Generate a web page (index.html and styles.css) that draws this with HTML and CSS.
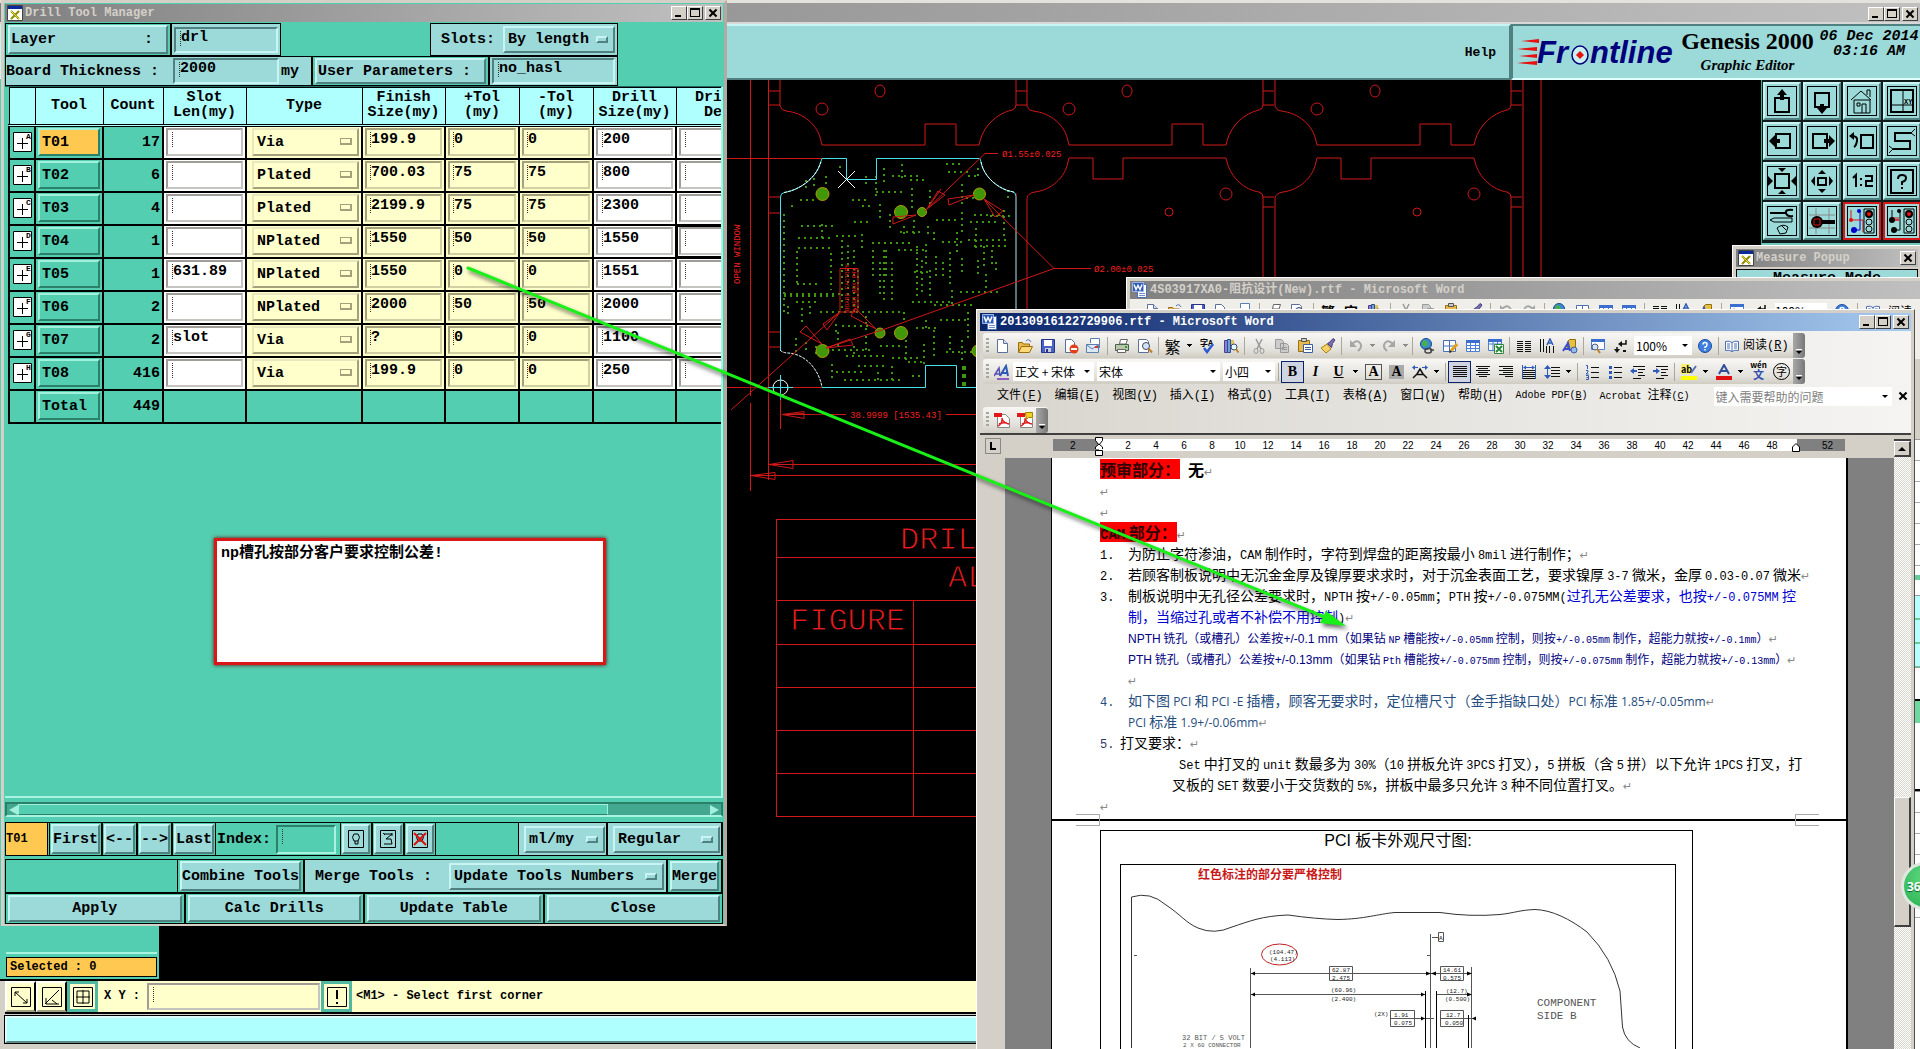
FILE: index.html
```html
<!DOCTYPE html>
<html lang="zh-CN">
<head>
<meta charset="utf-8">
<title>Genesis 2000 - Drill Tool Manager</title>
<link rel="stylesheet" href="styles.css">
</head>
<body>
<svg class="defs" aria-hidden="true">
  <defs>
    <symbol id="x-logo" viewBox="0 0 16 16"><path fill="#fff" stroke="#444" d="M.5.5h15v15H.5z"/><path fill="#0a2a9a" d="M1 1h14v3H1z"/><path stroke="#8a8a00" stroke-width="2" d="M4 6l8 8M12 6l-8 8"/><path stroke="#e8e020" stroke-width="1" d="M4 6l8 8"/></symbol>
    <symbol id="w-logo" viewBox="0 0 16 16"><path fill="#fff" stroke="#4a6fb5" d="M5.500 2.500h9v13h-9z"/><path stroke="#6d8fd0" d="M7 11.500h6M7 13.500h6"/><path fill="#2f5bb8" stroke="#9db7e6" d="M.5.5h11v9H.5z"/><path fill="none" stroke="#fff" stroke-width="1.500" d="M2 2.500l2 5 2-4 2 4 2-5"/></symbol>
    <symbol id="i-new" viewBox="0 0 16 16"><path fill="#fff" stroke="#5a6f9a" d="M3.500 1.500h6l4 4v9h-10z"/><path fill="#d5e0f5" stroke="#5a6f9a" d="M9.500 1.500v4h4"/></symbol>
    <symbol id="i-open" viewBox="0 0 16 16"><path fill="#e9b84a" stroke="#9a6f10" d="M1.500 14V4.500h4l1 1.500h6v2"/><path fill="#ffd978" stroke="#9a6f10" d="M1.500 14.500l3-6h11l-3 6z"/><path fill="none" stroke="#4a6fb5" d="M9 3q3-3 5 1"/></symbol>
    <symbol id="i-save" viewBox="0 0 16 16"><path fill="#4b62c4" stroke="#26348a" d="M1.500 1.500h13v13h-13z"/><path fill="#fff" d="M4 2h8v6H4z"/><path fill="#c8cdd8" d="M5 10h6v4H5z"/><path fill="#26348a" d="M6 11h2v3H6z"/></symbol>
    <symbol id="i-perm" viewBox="0 0 16 16"><path fill="#fff" stroke="#5a6f9a" d="M2.500 1.500h6l3 3v10h-9z"/><circle cx="11" cy="11" r="4.500" fill="#e0401c"/><path fill="#fff" d="M8 10h6v2H8z"/></symbol>
    <symbol id="i-mail" viewBox="0 0 16 16"><path fill="#fff" stroke="#5a7fb0" d="M4.500 5V.5h9V10"/><path fill="#dfe8f5" stroke="#5a7fb0" d="M.5 6.500h12v8H.5z"/><path fill="none" stroke="#5a7fb0" d="M1 7l5 4 6-4"/><path fill="#d33" d="M9 8h3v2H9z"/></symbol>
    <symbol id="i-print" viewBox="0 0 16 16"><path fill="#fff" stroke="#666" d="M5.500 6l1-4.500h7L12 6z"/><path fill="#b7c7a8" stroke="#4a6050" d="M1.500 6.500h13v6h-13z"/><path fill="#fff" stroke="#666" d="M3.500 11.500h8v3h-8z"/><path fill="#2c9c3c" d="M11 8h2v2h-2z"/></symbol>
    <symbol id="i-preview" viewBox="0 0 16 16"><path fill="#fff" stroke="#5a6f9a" d="M1.500 1.500h8l2 2v11h-10z"/><circle cx="9" cy="8" r="3.500" fill="#cfe6fa" stroke="#446"/><path stroke="#c08020" stroke-width="2" d="M11.500 10.500l3.500 4"/></symbol>
    <symbol id="i-spell" viewBox="0 0 16 16"><text x="0" y="8" font-size="8" font-weight="bold">字A</text><path fill="none" stroke="#2f5bd0" stroke-width="2.500" d="M4 10l3 4 6-8"/></symbol>
    <symbol id="i-research" viewBox="0 0 16 16"><path fill="#8a7fd0" stroke="#4a3f90" d="M1.500 2.500h3v12h-3z"/><path fill="#6fa0e0" stroke="#2a5090" d="M4.500 1.500h3v13h-3z"/><path fill="#e0c060" d="M8 2h3v5H8z"/><circle cx="11" cy="9" r="3" fill="#dff" stroke="#446"/><path stroke="#c08020" stroke-width="2" d="M13 11l2.500 3.500"/></symbol>
    <symbol id="i-cut" viewBox="0 0 16 16"><path fill="none" stroke="#999" stroke-width="1.500" d="M5 1l5 10M11 1L6 11"/><ellipse cx="5" cy="13" rx="2" ry="2.500" fill="none" stroke="#999"/><ellipse cx="11" cy="13" rx="2" ry="2.500" fill="none" stroke="#999"/></symbol>
    <symbol id="i-copy" viewBox="0 0 16 16"><path fill="#ccc" stroke="#999" d="M1.500 1.500h6l2 2v7h-8zM6.500 5.500h6l2 2v7h-8z"/><path stroke="#999" d="M8 9.500h5M8 11.500h5"/></symbol>
    <symbol id="i-paste" viewBox="0 0 16 16"><path fill="#e9b84a" stroke="#9a6f10" d="M1.500 2.500h11v11h-11z"/><path fill="#ccc" stroke="#555" d="M4.500.5h5v3h-5z"/><path fill="#fff" stroke="#3a5fa0" d="M6.500 6.500h9v8h-9z"/><path stroke="#3a5fa0" d="M8 9.500h6M8 11.500h6"/></symbol>
    <symbol id="i-brush" viewBox="0 0 16 16"><path fill="#f2d36a" stroke="#a98010" d="M1 10l6-4 4 5-5 4z"/><path fill="#7a6fb0" stroke="#443a80" d="M7.500 5.500L10 4l3-3.500 2 1.500-2.500 3.500-1 4z"/></symbol>
    <symbol id="i-undo" viewBox="0 0 16 16"><path fill="none" stroke="#a6a6a6" stroke-width="2" d="M4 6q5-5 8-1t-2 8"/><path fill="#a6a6a6" d="M2 2v7h7z"/></symbol>
    <symbol id="i-redo" viewBox="0 0 16 16"><path fill="none" stroke="#a6a6a6" stroke-width="2" d="M12 6Q7 1 4 5t2 8"/><path fill="#a6a6a6" d="M14 2v7H7z"/></symbol>
    <symbol id="i-link" viewBox="0 0 16 16"><circle cx="7" cy="6" r="5.500" fill="#3a8ad8" stroke="#1a4a80"/><path fill="#48b048" d="M4 2l4 1 1 4-4 2-2-3z"/><path fill="none" stroke="#444" stroke-width="1.500" d="M6 13q0-3 3-2.500h1q3 0 2.500 2.500t-3 2h-1Q6 15 6 13m5-1h4"/></symbol>
    <symbol id="i-tedit" viewBox="0 0 16 16"><path fill="#fff" stroke="#4a6fb5" d="M1.500 2.500h12v11h-12zM7.500 2v12M1 8h13"/><path stroke="#e0a020" stroke-width="3" d="M15 6l-6 7"/><path fill="#222" d="M7 15l1-3 2 2z"/></symbol>
    <symbol id="i-table" viewBox="0 0 16 16"><path fill="#fff" stroke="#4a7fd5" d="M1.500 2.500h13v11h-13zM5.500 3v11M10.500 3v11M1 7.500h14M1 10.500h14"/><path fill="#3a6fd0" d="M1 2h14v3H1z"/></symbol>
    <symbol id="i-excel" viewBox="0 0 16 16"><path fill="#fff" stroke="#4a7fd5" d="M.5 1.500h13v11H.5zM5 2v11M9.500 2v11M0 6h14"/><path fill="#3a6fd0" d="M0 1h14v3H0z"/><path fill="#fff" stroke="#2a8a3a" d="M6.500 6.500h9v9h-9z"/><path stroke="#2a8a3a" stroke-width="2" d="M8 8l6 6M14 8l-6 6"/></symbol>
    <symbol id="i-columns" viewBox="0 0 16 16"><path stroke="#111" d="M1 3.500h6M1 5.500h6M1 7.500h6M1 9.500h6M1 11.500h6M1 13.500h6M9 3.500h6M9 5.500h6M9 7.500h6M9 9.500h6M9 11.500h6M9 13.500h6"/></symbol>
    <symbol id="i-tdir" viewBox="0 0 16 16"><path stroke="#111" d="M1.500 1v13M4.500 1v13M7.500 8v7M10.500 8v7M14.500 8v7"/><path fill="none" stroke="#2f5bb8" stroke-width="1.500" d="M8 7l3-6 3 6M9 5h4"/></symbol>
    <symbol id="i-draw" viewBox="0 0 16 16"><path fill="#e8c040" stroke="#907010" d="M5.500 3.500l2-2h6v8l-2 2h-6z"/><path fill="none" stroke="#3a4fd0" stroke-width="2" d="M1 13L6 5l2 8M3 11h5"/><circle cx="12" cy="12" r="3" fill="#9ab8f0" stroke="#3a5fa0"/></symbol>
    <symbol id="i-map" viewBox="0 0 16 16"><path fill="#fff" stroke="#4a7fd5" d="M1.500 1.500h13v10h-13z"/><path fill="#3a6fd0" d="M1 1h14v3H1z"/><circle cx="5" cy="9" r="3" fill="#cfe6fa" stroke="#557"/><path stroke="#c08020" stroke-width="2" d="M7 11l3 4"/></symbol>
    <symbol id="i-para" viewBox="0 0 16 16"><path fill="none" stroke="#111" stroke-width="1.500" d="M13 2v4H8M4 9v3"/><path fill="#111" d="M5 6l4-3v6zM1 11l3 4 3-4zM10 12h3v2h-3z"/></symbol>
    <symbol id="i-help" viewBox="0 0 16 16"><circle cx="8" cy="8" r="6.500" fill="#3f7fe0" stroke="#1a4aa0"/><path fill="none" stroke="#fff" stroke-width="1.500" d="M6 6.500Q6 4.500 8 4.500t2 2T8 9v1M8 11v1.500"/></symbol>
    <symbol id="i-read" viewBox="0 0 16 16"><path fill="#fff" stroke="#4a6fb5" d="M1.500 3.500q4-1 6.500 1 2.500-2 6.500-1v9q-4-1-6.500 1-2.500-2-6.500-1z"/><path stroke="#4a6fb5" d="M8 4v10M3 6h3M3 8h3M3 10h3M10 6h3M10 8h3M10 10h3"/></symbol>
    <symbol id="i-just" viewBox="0 0 16 16"><path stroke="#111" d="M1 2.500h14M1 4.500h14M1 6.500h14M1 8.500h14M1 10.500h14M1 12.500h14"/></symbol>
    <symbol id="i-center" viewBox="0 0 16 16"><path stroke="#111" d="M1 2.500h14M3 4.500h10M1 6.500h14M3 8.500h10M1 10.500h14M4 12.500h8"/></symbol>
    <symbol id="i-right" viewBox="0 0 16 16"><path stroke="#111" d="M1 2.500h14M5 4.500h10M1 6.500h14M5 8.500h10M1 10.500h14M7 12.500h8"/></symbol>
    <symbol id="i-dist" viewBox="0 0 16 16"><path stroke="#111" d="M2 6.500h12M2 8.500h12M2 10.500h12M2 12.500h12M2 14.500h12"/><path stroke="#2f5bb8" d="M1.500 1v14M14.500 1v14M4 3.500h8"/><path fill="#2f5bb8" d="M2 3.500l3-2v4zM14 3.500l-3-2v4z"/></symbol>
    <symbol id="i-space" viewBox="0 0 16 16"><path stroke="#111" d="M7 3.500h9M7 6.500h9M7 9.500h9M7 12.500h9"/><path stroke="#2f5bb8" d="M3.500 2v12"/><path fill="#2f5bb8" d="M0 5l3.500-4L7 5zM0 11l3.500 4L7 11z"/></symbol>
    <symbol id="i-num" viewBox="0 0 16 16"><path stroke="#111" d="M7 3.500h8M7 8.500h8M7 13.500h8"/><path fill="none" stroke="#2f5bb8" d="M2 1.500h1.500V5M2 6.500h2v1.500l-2 2h2.500M2 11.500h2.500v4H2M2.500 13.500H4"/></symbol>
    <symbol id="i-bul" viewBox="0 0 16 16"><path stroke="#111" d="M7 3.500h8M7 8.500h8M7 13.500h8"/><path fill="#2f5bb8" d="M2 2h3v3H2zM2 7h3v3H2zM2 12h3v3H2z"/></symbol>
    <symbol id="i-out" viewBox="0 0 16 16"><path stroke="#111" d="M3 2.500h12M8 5.500h7M8 8.500h5M8 11.500h7M3 14.500h8"/><path fill="#2f5bb8" d="M0 7l4-3v2h3v2H4v2z"/></symbol>
    <symbol id="i-in" viewBox="0 0 16 16"><path stroke="#111" d="M3 2.500h12M8 5.500h7M8 8.500h5M8 11.500h7M3 14.500h8"/><path fill="#2f5bb8" d="M7 7L3 4v2H0v2h3v2z"/></symbol>
    <symbol id="i-aa" viewBox="0 0 16 16"><path fill="none" stroke="#5a4fb0" stroke-width="1.500" d="M0 12L5 4l1 8M2 10h4"/><path fill="none" stroke="#2f5bb8" stroke-width="2" d="M6 12l6-10 2 10M8 9h5"/><path stroke="#8a5fc0" stroke-width="2" d="M3 15h12"/></symbol>
    <symbol id="i-scale" viewBox="0 0 16 16"><path fill="none" stroke="#111" stroke-width="1.500" d="M1 14l4-4 3-5 3 5 4 4M5 10.500h6"/><path stroke="#2f5bb8" d="M1 3.500h5M10 3.500h5"/><path fill="#2f5bb8" d="M0 3.500l3-2.500v5zM16 3.500l-3-2.500v5z"/></symbol>
    <symbol id="i-hl" viewBox="0 0 16 16"><path fill="#f8f06a" d="M0 0h9v10H0z"/><text x="0" y="9" font-size="9" font-weight="bold">ab</text><path stroke="#5a6fb0" stroke-width="2" d="M15 2l-5 7"/><path fill="#ff0" d="M0 12h16v4H0z"/></symbol>
    <symbol id="i-fc" viewBox="0 0 16 16"><path fill="none" stroke="#2f4f9a" stroke-width="2" d="M3 10L8 1l5 9M5 7h6"/><path fill="#e01010" d="M0 12h16v4H0z"/></symbol>
    <symbol id="i-pdf" viewBox="0 0 16 16"><path fill="#fff" stroke="#888" d="M3.500 2.500h8l4 4v9h-12z"/><path fill="#e01818" d="M0 1h8v4H0z"/><path fill="none" stroke="#e01818" stroke-width="1.500" d="M8 6q1 5-4 8M8 7q2 4 7 5M5 12q4-2 8-1"/></symbol>
  </defs>
</svg>

<!-- Genesis graphic editor -->
<main class="editor">
  <header class="caption caption-main"><span class="grow"></span>
    <button class="cap min" aria-label="Minimize"></button><button class="cap max" aria-label="Maximize"></button><button class="cap close" aria-label="Close"></button>
  </header>
  <div class="banner">
    <nav class="menubar"><a href="#help">Help</a></nav>
    <div class="brand">
      <svg class="logo" width="160" height="34" viewBox="0 0 160 34" role="img" aria-label="Frontline">
        <path fill="#e81010" d="M4 6l18-2v4zM0 14l20-2v4zM2 21l18-2v4zM0 28l20-2v4z"/>
        <g font-family="Liberation Sans" font-weight="bold" font-style="italic" font-size="31" fill="#00007c"><text x="20" y="28">Fr</text><text x="73" y="28">ntline</text></g>
        <ellipse cx="63" cy="20" rx="8" ry="9" fill="#c8f0f0" stroke="#00007c" stroke-width="1.500"/><path fill="#e81010" d="M63 16l4 4-4 4-4-4z"/>
      </svg>
      <div class="product"><strong>Genesis 2000</strong><em>Graphic Editor</em></div>
      <time>06 Dec 2014<br>03:16 AM</time>
    </div>
  </div>
  <div class="workspace">
    <aside class="side"><div class="side-list"></div><div class="selected">Selected : 0</div></aside>
    <div class="canvas">
      <svg width="1600" height="900" viewBox="159 80 1600 900" fill="none" stroke="#d01818">
        <defs>
          <g id="upper"><path d="M0 80V106q2 5 6 5C24 113 38 125 41 141l1 4H145V124H176V145H199l1-4C204 125 218 113 232 110q4-1 4-5V80"/><ellipse cx="42" cy="109" rx="6" ry="6"/><ellipse cx="100" cy="91" rx="5" ry="6"/><path d="M236 91h11M236 105h11"/></g>
          <g id="lower"><path d="M42 158H66V179H96V158H199l1 4C204 178 218 190 232 192q4 1 4 5V420M42 158l-1 4C38 178 24 190 8 192q-7 1-8 6V420"/><circle cx="199" cy="194" r="6"/><circle cx="142" cy="212" r="4"/><path d="M236 197h11M236 207h11"/></g>
        </defs>
        <path d="M750.500 80V396M750.500 403V491M768.500 80V480M768 91h12M768 105h12M768 197h12M768 213h12M768 332h12M768 347h12M720 158.500H822M720 387.500H822M1016 193V400M1523 80V420M1541 80V420M780.500 387V429"/>
        <use href="#upper" x="780"/><use href="#upper" x="1027"/><use href="#upper" x="1275"/>
        <use href="#lower" x="1027"/><use href="#lower" x="1275"/>
        <g stroke="#3f960f" stroke-width="2" stroke-dasharray="2 4">
          <path d="M784 214V316M797 251V284M831 253V290M798 248H832M797 284h24M784 294h60M788 306v10M801 226h32M798 238h36M822 224v14M836 236h24M842 240V310M848 245V300M854 250V312M858 270V310M872 243H914M873 250v30M880 262v36M886 250v26M892 262v40M898 250h30M917 246V300M922 260V296M926 244v24M930 270V300M914 272h16M936 256v22M943 262v18M950 252v34M957 232v24M962 258v18M968 240h38M974 246h34M970 222h30M976 228v20M984 246v24M992 250v16M1004 210v30M974 215h26M978 260v14M986 274v16M996 262v10M960 292h40M934 305h40M884 250v50M942 242h24M952 290v16M868 312h34M784 296h50"/>
          <path d="M792 205v6M800 200h18M806 180v12M814 178v8M826 176v22M840 166v6M852 200h16M862 206h10M866 176v12M876 176v22M884 168v16M892 176h30M902 164v16M910 180h14M912 188v20M930 190v14M946 164h14M948 172h22M962 184v20M968 176h8M876 192h30M880 204v18M890 214v16M854 222h16M862 234v14M904 226v12M914 220v14M900 232h20M928 226v10M936 220h20M934 232v8M962 212v20M978 168v10M990 216h20M1008 190v10M966 198h18"/>
          <path d="M796 302h24M802 308v14M810 306v10M820 312h44M866 316v18M836 324v12M842 326h30M796 338v14M806 342v10M816 346v10M832 350h40M838 332v14M846 356h40M854 346v10M866 336v14M880 346h24M892 358h30M906 340v20M916 328h24M924 344v20M934 330v26M940 320h28M946 352h26M950 336v14M962 340v24M968 312v30M904 312v12M912 302h40M858 366h30M836 372h28M844 380h60M832 364v14M878 372v10M892 366v14M908 362h14M912 376h12M926 320v12"/>
        </g>
        <path stroke="#3f960f" stroke-width="4" stroke-dasharray="4 4" d="M964 366v22"/>
        <g fill="#409808" stroke="#b09a10"><circle cx="822.500" cy="194" r="6.500"/><circle cx="979.500" cy="194" r="6"/><circle cx="901" cy="212" r="6.500"/><circle cx="922" cy="212" r="4.500"/><circle cx="880" cy="333" r="5"/><circle cx="901" cy="333" r="6.500"/><circle cx="822.500" cy="351" r="6.500"/><circle cx="978" cy="351" r="6"/></g>
        <path stroke="#48e0e8" d="M822 158.500H846.500V179.500H876.500V158.500H980L981 162C984 178 1000 190 1012 191.500q4 1 4 5V350M981 387.500H956.500V365.500H925.500V387.500H822M780.500 350V197q0-4 4-4.500C800 190 816 178 820 164L822 158.500"/>
        <path stroke="#e8ffff" stroke-dasharray="3 1" d="M784 192.500C800 190 816 178 821 162M981 162C984 178 1000 190 1014 192M780 350q3 3 8 3C806 354 819 370 822 387"/>
        <path stroke="#fff" d="M838 171l17 17M855 171l-17 17"/><circle cx="780.500" cy="387.500" r="7.500" stroke="#fff"/><path stroke="#48e0e8" d="M768 387.500h25M780.500 375v25"/>
        <path d="M998 153.500H985L925 211M927 209l11-18 7 4zM927 209l14-20M974 195l-26 4 1 6zM916 215l-23 2v7zM1091 268.500H1054L984 199M984 199l11 18 8-6zM1054 268.500L885 329 826 348M826 348l24-9 3 6zM876 329l-25-13 4-8zM822 344l-22-12 6-6zM840 312L731 410M840 312l-17 12 4 6zM840 268.500h18V312H840z"/>
        <path d="M782 414.500H846M946 414.500H980M782 414.500l22-3v7zM782 414.500l22-1M769 464.500H980M769 464.500l24-4v8zM751 475.500H980M751 475.500l24-3v7z"/>
        <path d="M776.500 519.500H980M776.500 557.500H980M776.500 600.500H980M776.500 644.500H980M776.500 687.500H980M776.500 730.500H980M776.500 773.500H980M776.500 816.500H980M776.500 519V817M913.500 600V817"/>
        <g class="cad" stroke="none" fill="#f02020" font-size="9"><text x="1002" y="157">Ø1.55±0.025</text><text x="1094" y="272">Ø2.00±0.025</text><text x="850" y="418">38.9999 [1535.43]</text><text transform="translate(740 284) rotate(-90)">OPEN WINDOW</text><text font-size="6" transform="translate(849 311) rotate(-90)">BOARD FACTORY</text><text font-size="6" transform="translate(856 311) rotate(-90)">LOGO BOX 94V</text></g>
        <g class="cad" fill="#e81c1c" stroke="#000" font-size="32"><text x="900" y="549">DRILL</text><text x="948" y="587">ALL</text><text x="790" y="630">FIGURE</text></g>
      </svg>
    </div>
    <div class="tools">
      <button aria-label="Pan up"><svg viewBox="0 0 30 30"><path d="M8 12h14v14H8z"/><path class="f" d="M15 3l5 6h-3v5h-4V9h-3z"/></svg></button>
      <button aria-label="Pan down"><svg viewBox="0 0 30 30"><path d="M8 7h14v14H8z"/><path class="f" d="M15 28l5-6h-3v-4h-4v4h-3z"/></svg></button>
      <button aria-label="Home"><svg viewBox="0 0 30 30"><path class="t" d="M4 14L14 5l10 9M7 14v13h16V14zM20 9V4h3v7M15 27v-9h4v9M10 17h3v3h-3z"/></svg></button>
      <button aria-label="Coordinates"><svg viewBox="0 0 30 30"><path d="M4 4h22v22H4z"/><path class="t" d="M16 4v22M4 19h22"/><text x="17" y="18" font-size="7">XY</text></svg></button>
      <button aria-label="Pan left"><svg viewBox="0 0 30 30"><path d="M9 8h14v14H9z"/><path class="f" d="M2 15l6-6v4h5v4H8v4z"/></svg></button>
      <button aria-label="Pan right"><svg viewBox="0 0 30 30"><path d="M6 8h14v14H6z"/><path class="f" d="M28 15l-6-6v4h-5v4h5v4z"/></svg></button>
      <button aria-label="Previous view"><svg viewBox="0 0 30 30"><path d="M14 9h12v13H14zM5 10q6 0 5 5t-3 6"/><path class="f" d="M2 10l5-4v8z"/></svg></button>
      <button aria-label="Serpentine"><svg viewBox="0 0 30 30"><path d="M24 7H8v8h15v8H6"/><path class="t" d="M24 7l4-4M24 7l4 3M6 23l-4-3M6 23l-4 4"/></svg></button>
      <button aria-label="Zoom in"><svg viewBox="0 0 30 30"><path d="M8 8h14v14H8z"/><path class="f" d="M15 6l-4-4h8zM15 24l-4 4h8zM6 15l-5-5v10zM24 15l5-5v10z"/></svg></button>
      <button aria-label="Zoom out"><svg viewBox="0 0 30 30"><path d="M11 12h8v7h-8z"/><path class="f" d="M15 4l-4 4h8zM15 27l-4-4h8zM4 15l4-5v10zM26 15l-4-5v10z"/></svg></button>
      <button aria-label="Scale one to two"><svg viewBox="0 0 30 30"><path d="M6 12l3-3v12M14 12v2M14 18v2M18 10h7v5h-6v5h7"/></svg></button>
      <button aria-label="Query"><svg viewBox="0 0 30 30"><path d="M4 4h22v23H4zM11 13q0-4 4-4t4 3-4 4v3M15 21v2"/></svg></button>
      <button aria-label="Options"><svg viewBox="0 0 30 30"><path d="M3 7h16M26 4q-8-1-7 3t7 3"/><path class="t" d="M3 14l4-2h18v4H7zM10 22q6-5 11-1l-2 6-6 1zM15 20l4 4"/></svg></button>
      <button aria-label="Measure"><svg viewBox="0 0 30 30"><path stroke="#888" stroke-width="1" d="M2 9h26M2 22h26M9 2v26M22 2v26"/><circle class="f" cx="10" cy="16" r="6"/><path stroke-width="4" d="M14 16h14"/><path stroke="#e01010" stroke-width="1" d="M7 13h6v6H7z"/></svg></button>
      <button class="alert" aria-label="Net check on"><svg viewBox="0 0 30 30"><path class="t" stroke="#00c" d="M13 4v20H8"/><path class="t" stroke="#e01010" d="M4 4v10h12v12"/><circle cx="12" cy="5" r="2" fill="#00c" stroke="none"/><circle cx="7" cy="24" r="3" fill="#00c" stroke="none"/><circle cx="4" cy="14" r="2" fill="#e01010" stroke="none"/><path class="t" d="M17 3h10v24H17z"/><circle cx="22" cy="8" r="3" fill="#f01010"/><circle class="t" cx="22" cy="16" r="3"/><circle class="t" cx="22" cy="23" r="3"/></svg></button>
      <button class="alert" aria-label="Net check off"><svg viewBox="0 0 30 30"><path class="t" d="M13 4v20H8M5 4v10"/><path class="t" stroke="#e01010" d="M6 14h6M7 11v4M9 11v4M11 11v4"/><circle class="f" cx="12" cy="5" r="2"/><circle class="f" cx="7" cy="24" r="3"/><circle class="f" cx="5" cy="14" r="3"/><path class="t" d="M17 3h10v24H17z"/><circle cx="22" cy="8" r="3" fill="#f01010"/><circle class="t" cx="22" cy="16" r="3"/><circle class="t" cx="22" cy="23" r="3"/></svg></button>
    </div>
  </div>
  <footer class="status">
    <div class="coords">
      <button aria-label="Line mode"><svg viewBox="0 0 20 20"><path d="M.5.5h19v19H.5zM4 5l12 11M4 9V5h4M16 12v4h-4"/></svg></button>
      <button aria-label="Angle mode"><svg viewBox="0 0 20 20"><path d="M.5.5h19v19H.5zM3 17L17 3M4 11v6h13M10 13l5 4"/></svg></button>
      <button class="on" aria-label="Grid"><svg viewBox="0 0 20 20"><path d="M.5.5h19v19H.5zM4 4h12v12H4zM10 3v14M3 10h14"/></svg></button>
      <label for="xy">X Y :</label><input id="xy" class="ibeam">
      <button class="on" aria-label="Alert"><svg viewBox="0 0 20 20"><path d="M.5.5h19v19H.5z"/><path stroke-width="2" d="M10 3v9M10 15v2"/></svg></button>
      <output>&lt;M1&gt; - Select first corner</output>
    </div>
    <div class="message"></div>
  </footer>
</main>

<!-- Measure popup -->
<section class="win popup">
  <header class="caption inactive"><svg width="16" height="16"><use href="#x-logo"/></svg><span class="grow">Measure Popup</span><button class="cap close" aria-label="Close"></button></header>
  <div class="popup-body">Measure Mode</div>
</section>

<!-- Drill tool manager -->
<section class="win drill">
  <header class="caption inactive"><svg width="16" height="16"><use href="#x-logo"/></svg><span class="grow">Drill Tool Manager</span>
    <button class="cap min" aria-label="Minimize"></button><button class="cap max" aria-label="Maximize"></button><button class="cap close" aria-label="Close"></button>
  </header>
  <div class="params">
    <div class="cell w-layer"><button class="g wide"><span>Layer</span><span>:</span></button></div>
    <div class="cell light w-drl"><input class="ibeam lt" aria-label="Layer" value="drl"></div>
    <div class="gap"></div>
    <div class="cell light w-slots"><label for="slots">Slots:</label><span class="opt"><select id="slots"><option>By length</option></select></span></div>
  </div>
  <div class="params short">
    <div class="cell light w-board"><label for="thick">Board Thickness :</label><input id="thick" class="ibeam lt" value="2000"><span>my</span></div>
    <div class="cell w-user"><button class="g wide">User Parameters :</button></div>
    <div class="cell light w-hasl"><input class="ibeam lt" aria-label="User parameters" value="no_hasl"></div>
  </div>
  <div class="sheet">
    <table>
      <colgroup><col class="c26"><col class="c68"><col class="c60"><col class="c83"><col class="c116"><col class="c83"><col class="c74"><col class="c74"><col class="c83"><col class="c83"></colgroup>
      <thead><tr><th></th><th>Tool</th><th>Count</th><th>Slot<br>Len(my)</th><th>Type</th><th>Finish<br>Size(my)</th><th>+Tol<br>(my)</th><th>-Tol<br>(my)</th><th>Drill<br>Size(my)</th><th>Drill<br>Des</th></tr></thead>
      <tbody>
        <tr><td><svg class="sym"><path d="M.5.5h18v19H.5zM4 11.500h11M9.500 6v11"/><text x="13" y="7">A</text></svg></td><td><button class="tool hot">T01</button></td><td class="n">17</td><td class="w"><input class="ibeam" aria-label="Slot length"></td><td class="y"><span class="opt"><select aria-label="Type"><option>Via</option></select></span></td><td class="y"><input class="ibeam" aria-label="Finish size" value="199.9"></td><td class="y"><input class="ibeam" aria-label="Plus tolerance" value="0"></td><td class="y"><input class="ibeam" aria-label="Minus tolerance" value="0"></td><td class="w"><input class="ibeam" aria-label="Drill size" value="200"></td><td class="w"><input class="ibeam" aria-label="Designator"></td></tr>
        <tr><td><svg class="sym"><path d="M.5.5h18v19H.5zM4 11.500h11M9.500 6v11"/><text x="13" y="7">B</text></svg></td><td><button class="tool">T02</button></td><td class="n">6</td><td class="w"><input class="ibeam" aria-label="Slot length"></td><td class="y"><span class="opt"><select aria-label="Type"><option>Plated</option></select></span></td><td class="y"><input class="ibeam" aria-label="Finish size" value="700.03"></td><td class="y"><input class="ibeam" aria-label="Plus tolerance" value="75"></td><td class="y"><input class="ibeam" aria-label="Minus tolerance" value="75"></td><td class="w"><input class="ibeam" aria-label="Drill size" value="800"></td><td class="w"><input class="ibeam" aria-label="Designator"></td></tr>
        <tr><td><svg class="sym"><path d="M.5.5h18v19H.5zM4 11.500h11M9.500 6v11"/><text x="13" y="7">C</text></svg></td><td><button class="tool">T03</button></td><td class="n">4</td><td class="w"><input class="ibeam" aria-label="Slot length"></td><td class="y"><span class="opt"><select aria-label="Type"><option>Plated</option></select></span></td><td class="y"><input class="ibeam" aria-label="Finish size" value="2199.9"></td><td class="y"><input class="ibeam" aria-label="Plus tolerance" value="75"></td><td class="y"><input class="ibeam" aria-label="Minus tolerance" value="75"></td><td class="w"><input class="ibeam" aria-label="Drill size" value="2300"></td><td class="w"><input class="ibeam" aria-label="Designator"></td></tr>
        <tr><td><svg class="sym"><path d="M.5.5h18v19H.5zM4 11.500h11M9.500 6v11"/><text x="13" y="7">D</text></svg></td><td><button class="tool">T04</button></td><td class="n">1</td><td class="w"><input class="ibeam" aria-label="Slot length"></td><td class="y"><span class="opt"><select aria-label="Type"><option>NPlated</option></select></span></td><td class="y"><input class="ibeam" aria-label="Finish size" value="1550"></td><td class="y"><input class="ibeam" aria-label="Plus tolerance" value="50"></td><td class="y"><input class="ibeam" aria-label="Minus tolerance" value="50"></td><td class="w"><input class="ibeam" aria-label="Drill size" value="1550"></td><td class="w focus"><input class="ibeam" aria-label="Designator"></td></tr>
        <tr><td><svg class="sym"><path d="M.5.5h18v19H.5zM4 11.500h11M9.500 6v11"/><text x="13" y="7">E</text></svg></td><td><button class="tool">T05</button></td><td class="n">1</td><td class="w"><input class="ibeam" aria-label="Slot length" value="631.89"></td><td class="y"><span class="opt"><select aria-label="Type"><option>NPlated</option></select></span></td><td class="y"><input class="ibeam" aria-label="Finish size" value="1550"></td><td class="y"><input class="ibeam" aria-label="Plus tolerance" value="0"></td><td class="y"><input class="ibeam" aria-label="Minus tolerance" value="0"></td><td class="w"><input class="ibeam" aria-label="Drill size" value="1551"></td><td class="w"><input class="ibeam" aria-label="Designator"></td></tr>
        <tr><td><svg class="sym"><path d="M.5.5h18v19H.5zM4 11.500h11M9.500 6v11"/><text x="13" y="7">F</text></svg></td><td><button class="tool">T06</button></td><td class="n">2</td><td class="w"><input class="ibeam" aria-label="Slot length"></td><td class="y"><span class="opt"><select aria-label="Type"><option>NPlated</option></select></span></td><td class="y"><input class="ibeam" aria-label="Finish size" value="2000"></td><td class="y"><input class="ibeam" aria-label="Plus tolerance" value="50"></td><td class="y"><input class="ibeam" aria-label="Minus tolerance" value="50"></td><td class="w"><input class="ibeam" aria-label="Drill size" value="2000"></td><td class="w"><input class="ibeam" aria-label="Designator"></td></tr>
        <tr><td><svg class="sym"><path d="M.5.5h18v19H.5zM4 11.500h11M9.500 6v11"/><text x="13" y="7">G</text></svg></td><td><button class="tool">T07</button></td><td class="n">2</td><td class="w"><input class="ibeam" aria-label="Slot length" value="slot"></td><td class="y"><span class="opt"><select aria-label="Type"><option>Via</option></select></span></td><td class="y"><input class="ibeam" aria-label="Finish size" value="?"></td><td class="y"><input class="ibeam" aria-label="Plus tolerance" value="0"></td><td class="y"><input class="ibeam" aria-label="Minus tolerance" value="0"></td><td class="w"><input class="ibeam" aria-label="Drill size" value="1100"></td><td class="w"><input class="ibeam" aria-label="Designator"></td></tr>
        <tr><td><svg class="sym"><path d="M.5.5h18v19H.5zM4 11.500h11M9.500 6v11"/><text x="13" y="7">H</text></svg></td><td><button class="tool">T08</button></td><td class="n">416</td><td class="w"><input class="ibeam" aria-label="Slot length"></td><td class="y"><span class="opt"><select aria-label="Type"><option>Via</option></select></span></td><td class="y"><input class="ibeam" aria-label="Finish size" value="199.9"></td><td class="y"><input class="ibeam" aria-label="Plus tolerance" value="0"></td><td class="y"><input class="ibeam" aria-label="Minus tolerance" value="0"></td><td class="w"><input class="ibeam" aria-label="Drill size" value="250"></td><td class="w"><input class="ibeam" aria-label="Designator"></td></tr>
        <tr><td></td><td><button class="tool">Total</button></td><td class="n">449</td><td></td><td></td><td></td><td></td><td></td><td></td><td></td></tr>
      </tbody>
    </table>
  </div>
  <div class="hscroll"><span class="tri left"></span><span class="thumb"></span><span class="grow"></span><span class="tri right"></span></div>
  <div class="bar nav">
    <span class="current">T01</span>
    <div class="cell"><button class="g">First</button></div><div class="cell"><button class="g">&lt;--</button></div><div class="cell"><button class="g">--&gt;</button></div><div class="cell"><button class="g">Last</button></div>
    <label for="index">Index:</label><input id="index" class="ibeam idx">
    <div class="cell"><button class="g ic" aria-label="Highlight"><svg viewBox="0 0 16 18"><path d="M.5.5h15v17H.5zM6 11q-3-4 0-7h4q3 3 0 7zM7 11v3h3v-3"/></svg></button></div>
    <div class="cell"><button class="g ic" aria-label="Select"><svg viewBox="0 0 16 18"><path d="M.5.5h15v17H.5zM4 4h8l-6 5h5l1 5H4M3 3l2 2M12 3v3"/></svg></button></div>
    <div class="cell"><button class="g ic" aria-label="Clear"><svg viewBox="0 0 16 18"><path d="M.5.5h15v17H.5zM6 11q-3-4 0-7h4q3 3 0 7z"/><path stroke="#e01010" stroke-width="2" d="M2 3l12 12M14 3L2 15"/></svg></button></div>
    <span class="grow"></span>
    <div class="cell light w-unit"><span class="opt"><select aria-label="Units"><option>ml/my</option></select></span></div>
    <div class="cell light w-reg"><span class="opt"><select aria-label="Mode"><option>Regular</option></select></span></div>
  </div>
  <div class="bar merge">
    <span class="grow"></span>
    <div class="cell"><button class="g">Combine Tools</button></div>
    <div class="cell light w-merge"><label for="merge">Merge Tools :</label><span class="opt"><select id="merge"><option>Update Tools Numbers</option></select></span></div>
    <div class="cell"><button class="g">Merge</button></div>
  </div>
  <div class="actions"><div class="cell"><button class="g">Apply</button></div><div class="cell"><button class="g">Calc Drills</button></div><div class="cell"><button class="g">Update Table</button></div><div class="cell"><button class="g">Close</button></div></div>
</section>

<p class="note">np槽孔按部分客户要求控制公差!</p>

<!-- Word, background document -->
<section class="win word-back">
  <header class="caption inactive"><svg width="16" height="16"><use href="#w-logo"/></svg><span>4S03917XA0-阻抗设计(New).rtf - Microsoft Word</span></header>
  <div class="back-tools"><svg width="16" height="16"><use href="#i-new"/></svg><svg width="16" height="16"><use href="#i-open"/></svg><svg width="16" height="16"><use href="#i-save"/></svg><svg width="16" height="16"><use href="#i-perm"/></svg><svg width="16" height="16"><use href="#i-mail"/></svg><i></i><svg width="16" height="16"><use href="#i-print"/></svg><svg width="16" height="16"><use href="#i-preview"/></svg><i></i><b>繁</b><b>字</b><svg width="16" height="16"><use href="#i-research"/></svg><i></i><svg width="16" height="16"><use href="#i-cut"/></svg><svg width="16" height="16"><use href="#i-copy"/></svg><svg width="16" height="16"><use href="#i-paste"/></svg><svg width="16" height="16"><use href="#i-brush"/></svg><i></i><svg width="16" height="16"><use href="#i-undo"/></svg><svg width="16" height="16"><use href="#i-redo"/></svg><i></i><svg width="16" height="16"><use href="#i-link"/></svg><svg width="16" height="16"><use href="#i-tedit"/></svg><svg width="16" height="16"><use href="#i-table"/></svg><svg width="16" height="16"><use href="#i-table"/></svg><i></i><svg width="16" height="16"><use href="#i-columns"/></svg><svg width="16" height="16"><use href="#i-tdir"/></svg><svg width="16" height="16"><use href="#i-draw"/></svg><i></i><svg width="16" height="16"><use href="#i-map"/></svg><svg width="16" height="16"><use href="#i-para"/></svg><span class="pct">100%</span><svg width="16" height="16"><use href="#i-help"/></svg><i></i><svg width="16" height="16"><use href="#i-read"/></svg><span>阅读</span></div>
  <div class="back-doc"><i class="a"></i><i class="b"></i><i class="c"></i><i class="d"></i><i class="e"></i><i class="a"></i></div>
</section>

<!-- Word, foreground document -->
<section class="win word">
  <header class="caption active"><svg width="16" height="16"><use href="#w-logo"/></svg><span class="grow">20130916122729906.rtf - Microsoft Word</span>
    <button class="cap min" aria-label="Minimize"></button><button class="cap max" aria-label="Maximize"></button><button class="cap close" aria-label="Close"></button>
  </header>
  <div class="word-bars">
    <div class="strip">
      <button aria-label="新建"><svg><use href="#i-new"/></svg></button><button aria-label="打开"><svg><use href="#i-open"/></svg></button><button aria-label="保存"><svg><use href="#i-save"/></svg></button><button aria-label="权限"><svg><use href="#i-perm"/></svg></button><button aria-label="邮件"><svg><use href="#i-mail"/></svg></button><i class="sep"></i>
      <button aria-label="打印"><svg><use href="#i-print"/></svg></button><button aria-label="预览"><svg><use href="#i-preview"/></svg></button><i class="sep"></i>
      <button class="fan">繁</button><i class="dd"></i><button aria-label="拼写"><svg><use href="#i-spell"/></svg></button><button aria-label="信息检索"><svg><use href="#i-research"/></svg></button><i class="sep"></i>
      <button aria-label="剪切"><svg><use href="#i-cut"/></svg></button><button aria-label="复制"><svg><use href="#i-copy"/></svg></button><button aria-label="粘贴"><svg><use href="#i-paste"/></svg></button><button aria-label="格式刷"><svg><use href="#i-brush"/></svg></button><i class="sep"></i>
      <button aria-label="撤消"><svg><use href="#i-undo"/></svg></button><i class="dd off"></i><button aria-label="恢复"><svg><use href="#i-redo"/></svg></button><i class="dd off"></i><i class="sep"></i>
      <button aria-label="超链接"><svg><use href="#i-link"/></svg></button><button aria-label="表格和边框"><svg><use href="#i-tedit"/></svg></button><button aria-label="插入表格"><svg><use href="#i-table"/></svg></button><button aria-label="插入 Excel"><svg><use href="#i-excel"/></svg></button><i class="sep"></i>
      <button aria-label="分栏"><svg><use href="#i-columns"/></svg></button><button aria-label="文字方向"><svg><use href="#i-tdir"/></svg></button><button aria-label="绘图"><svg><use href="#i-draw"/></svg></button><i class="sep"></i>
      <button aria-label="文档结构图"><svg><use href="#i-map"/></svg></button><button aria-label="段落标记"><svg><use href="#i-para"/></svg></button>
      <span class="combo zoom"><select aria-label="显示比例"><option>100%</option></select></span>
      <button aria-label="帮助"><svg><use href="#i-help"/></svg></button><i class="sep"></i>
      <button class="read"><svg><use href="#i-read"/></svg><span>阅读(<u>R</u>)</span></button><i class="end"></i>
    </div>
    <div class="strip">
      <button aria-label="样式"><svg><use href="#i-aa"/></svg></button>
      <span class="combo style"><select aria-label="样式"><option>正文 + 宋体</option></select></span><span class="combo font"><select aria-label="字体"><option>宋体</option></select></span><span class="combo size"><select aria-label="字号"><option>小四</option></select></span><i class="sep"></i>
      <button class="fmt on"><b>B</b></button><button class="fmt"><em>I</em></button><button class="fmt"><u>U</u></button><i class="dd"></i><button class="fmt"><span class="boxed">A</span></button><button class="fmt"><span class="shaded">A</span></button><button aria-label="字符缩放"><svg><use href="#i-scale"/></svg></button><i class="dd"></i><i class="sep"></i>
      <button class="on" aria-label="两端对齐"><svg><use href="#i-just"/></svg></button><button aria-label="居中"><svg><use href="#i-center"/></svg></button><button aria-label="右对齐"><svg><use href="#i-right"/></svg></button><button aria-label="分散对齐"><svg><use href="#i-dist"/></svg></button><button aria-label="行距"><svg><use href="#i-space"/></svg></button><i class="dd"></i><i class="sep"></i>
      <button aria-label="编号"><svg><use href="#i-num"/></svg></button><button aria-label="项目符号"><svg><use href="#i-bul"/></svg></button><button aria-label="减少缩进"><svg><use href="#i-out"/></svg></button><button aria-label="增加缩进"><svg><use href="#i-in"/></svg></button><i class="sep"></i>
      <button aria-label="突出显示"><svg><use href="#i-hl"/></svg></button><i class="dd"></i><button aria-label="字体颜色"><svg><use href="#i-fc"/></svg></button><i class="dd"></i><button class="wen"><small>wén</small><b>文</b></button><button class="fmt"><span class="ring">字</span></button><i class="end"></i>
    </div>
    <nav class="word-menu">
      <a href="#file">文件(<u>F</u>)</a><a href="#edit">编辑(<u>E</u>)</a><a href="#view">视图(<u>V</u>)</a><a href="#insert">插入(<u>I</u>)</a><a href="#format">格式(<u>O</u>)</a><a href="#tools">工具(<u>T</u>)</a><a href="#table">表格(<u>A</u>)</a><a href="#window">窗口(<u>W</u>)</a><a href="#help2">帮助(<u>H</u>)</a><a class="latin" href="#pdf">Adobe PDF(<u>B</u>)</a><a class="latin" href="#acrobat">Acrobat <span>注释</span>(<u>C</u>)</a>
      <span class="grow"></span><span class="combo ask"><input aria-label="键入需要帮助的问题" placeholder="键入需要帮助的问题"></span><button class="x" aria-label="关闭文档"></button>
    </nav>
    <div class="strip small"><button aria-label="转换为 PDF"><svg><use href="#i-pdf"/></svg></button><button aria-label="转换并审阅"><svg><use href="#i-pdf"/><path fill="#f4d020" stroke="#a08000" d="M8.500.5h7v5h-4l-2 2z"/></svg></button><i class="end"></i></div>
  </div>
  <div class="view">
    <div class="view-main">
      <div class="ruler">
        <button class="tab-kind" aria-label="制表符"></button>
        <div class="scale"><div class="dark">2</div>
          <div class="nums"><span>2</span><span>4</span><span>6</span><span>8</span><span>10</span><span>12</span><span>14</span><span>16</span><span>18</span><span>20</span><span>22</span><span>24</span><span>26</span><span>28</span><span>30</span><span>32</span><span>34</span><span>36</span><span>38</span><span>40</span><span>42</span><span>44</span><span>46</span><span>48</span></div>
          <div class="dark last">52</div>
          <svg class="indent" viewBox="0 0 10 22"><path fill="#fff" stroke="#000" d="M1.500 1.500h7v3L5 9 1.500 4.500zM1.500 13V11L5 8l3.500 3v2M1.500 14.500h7v5h-7z"/></svg>
          <svg class="indent-r" viewBox="0 0 10 10"><path fill="#fff" stroke="#000" d="M1.500 9.500V5L5 1.500 8.500 5v4.500z"/></svg>
        </div>
      </div>
      <div class="doc">
        <div class="gutter"></div>
        <article class="page">
          <div class="text">
            <p><b class="hd">预审部分：</b><b class="no">无</b><s>↵</s></p>
            <p><s>↵</s></p>
            <p><s>↵</s></p>
            <p><b class="hd cam"><span class="en2">CAM</span> 部分：</b><s>↵</s></p>
            <p><i class="num">1.</i>为防止字符渗油，<span>CAM</span> 制作时，字符到焊盘的距离按最小 <span>8mil</span> 进行制作；<s>↵</s></p>
            <p><i class="num">2.</i>若顾客制板说明中无沉金金厚及镍厚要求求时，对于沉金表面工艺，要求镍厚 <span>3-7</span> 微米，金厚 <span>0.03-0.07</span> 微米<s>↵</s></p>
            <p><i class="num">3.</i>制板说明中无孔径公差要求时，<span>NPTH</span> 按<span>+/-0.05mm</span>；<span>PTH</span> 按<span>+/-0.075MM(</span><em>过孔无公差要求，也按<span>+/-0.075MM</span> 控</em></p>
            <p class="in"><em>制，当缩过孔或者不补偿不用控制</em><span>)</span><s>↵</s></p>
            <p class="in sm"><strong>NPTH</strong> 铣孔（或槽孔）公差按<strong>+/-0.1 mm</strong>（如果钻 <span>NP</span> 槽能按<span>+/-0.05mm</span> 控制，则按<span>+/-0.05mm</span> 制作，超能力就按<span>+/-0.1mm</span>）<s>↵</s></p>
            <p class="in sm"><strong>PTH</strong> 铣孔（或槽孔）公差按<strong>+/-0.13mm</strong>（如果钻 <span>Pth</span> 槽能按<span>+/-0.075mm</span> 控制，则按<span>+/-0.075mm</span> 制作，超能力就按<span>+/-0.13mm</span>）<s>↵</s></p>
            <p class="in"><s>↵</s></p>
            <p class="bl"><i class="num">4.</i>如下图 <strong>PCI</strong> 和 <strong>PCI -E</strong> 插槽，顾客无要求时，定位槽尺寸（金手指缺口处）<strong>PCI</strong> 标准 <strong>1.85+/-0.05mm</strong><s>↵</s></p>
            <p class="in bl"><strong>PCI</strong> 标准 <strong>1.9+/-0.06mm</strong><s>↵</s></p>
            <p><i class="num five">5.</i>打叉要求：<s>↵</s></p>
            <p class="in-b"><span>Set</span> 中打叉的 <span>unit</span> 数最多为 <span>30%</span>（<span>10</span> 拼板允许 <span>3PCS</span> 打叉），<span>5</span> 拼板（含 <span>5</span> 拼）以下允许 <span>1PCS</span> 打叉，打</p>
            <p class="in-c">叉板的 <span>SET</span> 数要小于交货数的 <span>5%</span>，拼板中最多只允许 <span>3</span> 种不同位置打叉。<s>↵</s></p>
            <p><s>↵</s></p>
          </div>
          <div class="break"></div>
          <div class="figure">
            <h2>PCI 板卡外观尺寸图:</h2>
            <div class="plate">
              <p>红色标注的部分要严格控制</p>
              <svg width="555" height="165" viewBox="1121 884 555 165" fill="none" stroke="#555">
                <path stroke="#333" d="M1131.500 1049V898Q1150 892 1166 906C1180 915 1186 924 1198 929Q1214 936 1232 928C1250 922 1262 917 1288 916Q1316 920 1338 920.500C1365 920 1378 915 1395 913.500H1440Q1470 918 1500 915.500C1514 914 1520 911 1535 910.500C1552 911 1570 920 1587 933Q1612 958 1620 992L1622.500 1028Q1625 1043 1640 1049"/>
                <path d="M1430.500 935V1049M1250.500 969V1049M1251 974.500H1472M1251 995.500H1425M1437 995.500H1472M1471.500 968V1049M1390 1019.500H1434M1462 1019.500H1476"/>
                <path stroke="#000" d="M1425.500 992V1049M1436.500 992V1049M1468.500 1016V1049"/>
                <path fill="#000" stroke="none" d="M1251 974.500l4-2v4zM1251 995.500l4-2v4zM1431 974.500l-5-2v4zM1425 995.500l-4-2v4zM1472 974.500l-5-2v4zM1472 995.500l-5-2v4zM1472 1019.500l4-2v4zM1425 1019.500l-4-2v4zM1431 974.500l5-2v4z"/>
                <path fill="#fff" d="M1329.500 967.500h23v14h-23zM1390.500 1011.500h24v16h-24zM1440.500 967.500h23v14h-23zM1440.500 1011.500h23v16h-23zM1438.500 933.500h5v9h-5z"/>
                <path d="M1330 974.500h22M1391 1019.500h23M1441 974.500h22M1441 1019.500h22M1432 938.500h6M1134 956.500h3M1427 956.500h3"/>
                <ellipse cx="1279.500" cy="955.500" rx="18" ry="10.500" stroke="#c02020"/>
                <g class="cad" fill="#222" stroke="none" font-size="6"><text x="1269" y="955">(104.47)</text><text x="1270" y="962">(4.113)</text><text x="1332" y="973">62.87</text><text x="1332" y="981">2.475</text><text x="1331" y="993">(60.96)</text><text x="1331" y="1002">(2.400)</text><text x="1374" y="1017">(2X)</text><text x="1394" y="1018">1.91</text><text x="1394" y="1026">0.075</text><text x="1443" y="973">14.61</text><text x="1443" y="981">0.575</text><text x="1446" y="994">(12.7)</text><text x="1445" y="1002">(0.500)</text><text x="1446" y="1018">12.7</text><text x="1445" y="1026">0.050</text><text x="1439" y="941">A</text></g>
                <g class="cad" fill="#555" stroke="none"><text font-size="7" x="1182" y="1041">32 BIT / 5 VOLT</text><text font-size="6" x="1183" y="1048">2 X 60 CONNECTOR</text><text font-size="11" x="1537" y="1007">COMPONENT</text><text font-size="11" x="1537" y="1020">SIDE B</text></g>
              </svg>
            </div>
          </div>
        </article>
        <div class="gutter right"></div>
      </div>
    </div>
    <div class="vscroll"><span class="split"></span><button class="up" aria-label="向上滚动"></button><span class="track"></span><span class="knob"></span><span class="track rest"></span></div>
  </div>
</section>

<button class="badge">360</button>

<svg class="arrow" width="1400" height="660" aria-hidden="true"><path stroke="#18f018" stroke-width="3" stroke-linecap="round" d="M468 268L1332 620"/><path fill="#18f018" d="M1346 626l-20-15-6 12z"/></svg>
</body>
</html>
```
FILE: styles.css
```css
*, *::before, *::after { box-sizing: border-box; }
:root {
  --teal: #54ceb0;
  --aqua: #9cdada;
  --cream: #ffffcc;
  --face: #d4d0c8;
  --mono: "Liberation Mono", "Noto Sans CJK SC", monospace;
  --cjk: "Noto Sans CJK SC", sans-serif;
}
body {
  margin: 0;
  position: relative;
  height: 100vh;
  overflow: hidden;
  background: #000;
  color: #000;
  font: bold 15px/15px var(--mono);
}
button, input, select { font: inherit; color: inherit; margin: 0; padding: 0; border: 0; border-radius: 0; background: none; min-width: 0; }
select { appearance: none; outline: 0; }
p, h2 { margin: 0; }
a { color: inherit; text-decoration: none; }
.defs { position: absolute; width: 0; height: 0; }
.grow { flex: 1; }
.cad { font-family: "Liberation Mono", monospace; font-weight: normal; }

/* window frames and captions */
.win { position: absolute; border: 1px solid #fff; border-right-color: #505050; border-bottom-color: #505050; padding: 3px; background: var(--face); overflow: hidden; }
.caption { display: flex; align-items: center; height: 18px; padding: 0 2px; gap: 2px; font-size: 12px; white-space: nowrap; background: linear-gradient(90deg, #808080, #c0c0c0); color: var(--face); }
.caption.active { background: linear-gradient(90deg, #0a246a, #a6caf0); color: #fff; }
.caption svg { flex: none; }
.cap { flex: none; position: relative; width: 16px; height: 14px; background: var(--face); border: 1px solid #fff; border-right-color: #404040; border-bottom-color: #404040; margin-left: -2px; }
.cap.close { margin-left: 0; }
.cap.min::after { content: ""; position: absolute; left: 3px; bottom: 2px; width: 6px; height: 2px; background: #000; }
.cap.max::after { content: ""; position: absolute; left: 2px; top: 1px; width: 10px; height: 9px; border: 1px solid #000; border-top-width: 2px; }
.cap.close::before, .cap.close::after, .x::before, .x::after { content: ""; position: absolute; left: 2px; top: 5px; width: 10px; height: 2px; background: #000; rotate: 45deg; }
.cap.close::after, .x::after { rotate: -45deg; }

/* graphic editor */
.editor { display: flex; flex-direction: column; height: 100%; background: var(--face); }
.caption-main { height: 24px; padding-top: 2px; border-top: 3px solid #e4e2dc; border-bottom: 2px solid #d8d8d8; }
.banner { display: flex; height: 56px; background: var(--aqua); }
.menubar { flex: 1; display: flex; justify-content: flex-end; align-items: center; padding-right: 13px; font-size: 13px; border: 2px solid #c8f4f4; border-right-color: #508080; border-bottom-color: #508080; }
.brand { display: flex; width: 409px; border: 2px solid #508080; border-right: 0; border-bottom-color: #e0ffff; }
.logo { margin: 9px 0 0 4px; flex: none; }
.product { width: 141px; display: flex; flex-direction: column; align-items: center; font-family: "Liberation Serif", serif; white-space: nowrap; }
.product strong { font-size: 24px; line-height: 30px; }
.product em { font-size: 15px; line-height: 18px; }
.brand time { flex: 1; text-align: center; font-style: italic; padding-top: 3px; white-space: nowrap; }
.workspace { flex: 1; display: flex; min-height: 0; background: #000; }
.side { width: 159px; display: flex; flex-direction: column; padding: 0 2px 2px 6px; background: var(--teal); margin-bottom: 2px; }
.side-list { flex: 1; border-bottom: 2px solid #a8f4e0; margin-bottom: 3px; }
.selected { background: #ffc850; border: 1px solid #000; padding: 2px 3px; font-size: 12px; line-height: 14px; }
.canvas { flex: 1; min-width: 0; overflow: hidden; }
.canvas svg { display: block; }
.tools { width: 159px; align-self: flex-start; overflow: hidden; display: grid; grid-template-columns: repeat(4, 38px); grid-auto-rows: 38px; gap: 2px; padding: 2px 0 3px 1px; background: #101c1c; border-left: 1px solid #48a890; border-bottom: 3px solid #70c8b8; }
.tools button { background: var(--aqua); border: 2px solid #c8f4f4; border-right-color: #508080; border-bottom-color: #508080; padding: 2px; }
.tools .alert { border-color: #d81818; }
.tools svg { display: block; width: 30px; height: 30px; outline: 1px solid #000; outline-offset: -1px; fill: none; stroke: #000; stroke-width: 2; }
.tools text { fill: #000; stroke: none; }
.tools .f { fill: #000; stroke: none; }
.tools .t { stroke-width: 1; }
.status { padding: 0 0 6px 5px; }
.coords { display: flex; align-items: stretch; height: 33px; background: var(--cream); border-bottom: 2px solid #000; font-size: 12px; }
.coords button { width: 31px; border: 2px solid #fff; border-right-color: #000; border-bottom-color: #a0a080; display: grid; place-items: center; }
.coords .on { border: 3px solid #50b8a0; }
.coords svg { width: 20px; height: 20px; fill: none; stroke: #000; }
.coords label { align-self: center; width: 48px; text-align: center; white-space: nowrap; }
.coords input { width: 173px; margin: 2px 1px; }
.coords output { align-self: center; padding-left: 4px; }
.message { margin-top: 2px; height: 27px; background: #b0ffff; border: 2px solid #e0ffff; border-bottom-color: #608888; outline: 1px solid #000; }

/* text boxes with the dotted insertion mark */
.ibeam { padding: 0 0 5px 5px; border: 2px solid #a09c98; border-right-color: #c4c4c0; border-bottom-color: #c4c4c0; background: repeating-linear-gradient(#333 0 1px, transparent 1px 2px) 4px 2px / 1px 15px no-repeat; outline: 0; }
.ibeam.lt { border-color: #508080 #c8f4f4 #c8f4f4 #508080; background-color: var(--aqua); height: 26px; }

/* drill tool manager */
.drill { left: 1px; top: 0; width: 726px; height: 926px; display: flex; flex-direction: column; background: var(--teal); border: 3px solid var(--face); border-right-color: #b0aca4; border-bottom-width: 2px; padding: 1px 1px 0; }
.drill .caption { flex: none; margin: 0 0 1px; }
.cell { border: 1px solid #000; padding: 1px 2px; display: flex; align-items: stretch; background: var(--teal); }
.cell.light { background: var(--aqua); align-items: center; }
.g { flex: 1; background: var(--aqua); border: 2px solid #c8f4f4; border-right-color: #508080; border-bottom-color: #508080; white-space: nowrap; }
.g.wide { display: flex; justify-content: space-between; align-items: center; padding: 0 13px 0 1px; }
.opt { position: relative; display: flex; flex: 1; height: 27px; border: 2px solid #c8f4f4; border-right-color: #508080; border-bottom-color: #508080; }
.opt select { flex: 1; padding: 0 0 0 3px; }
.opt::after { content: ""; position: absolute; right: 5px; top: 8px; width: 12px; height: 7px; border: 2px solid #c8f4f4; border-right-color: #508080; border-bottom-color: #508080; }
.params { flex: none; display: flex; height: 33px; }
.params.short { height: 30px; }
.params .gap { width: 149px; }
.w-layer { width: 166px; } .w-drl { width: 110px; } .w-slots { width: 188px; }
.w-board { width: 307px; } .w-user { width: 177px; } .w-hasl { width: 129px; }
.w-drl input, .w-hasl input { flex: 1; }
.w-slots label { padding: 0 8px; }
.w-board { justify-content: space-between; padding-left: 0; }
.w-board input { width: 106px; margin-left: 12px; }
.w-board span { padding-right: 10px; }
.sheet { flex: 1; min-height: 0; overflow: hidden; padding: 0 0 0 3px; border-top: 1px solid #266; border-bottom: 2px solid #a8f4e0; border-right: 2px solid #a8f4e0; }
table { border-collapse: collapse; table-layout: fixed; width: 750px; }
.c26 { width: 26px; } .c68 { width: 68px; } .c60 { width: 60px; } .c83 { width: 83px; } .c116 { width: 116px; } .c74 { width: 74px; }
th { height: 38px; padding: 0 0 2px; background: #b0ffff; border: 1px solid #000; border-bottom: 3px double #000; }
td { height: 33px; padding: 1px 2px; border: 2px solid #000; }
td input { display: block; width: 100%; height: 28px; }
.w { background: #fff; }
.y { background: var(--cream); }
.y .ibeam { padding-left: 4px; border-color: #a4a07c #d0d0a4 #d0d0a4 #a4a07c; background-position: 3px 2px; }
.y .opt, .y .opt::after { border-color: #e8e8c0 #a4a07c #a4a07c #e8e8c0; }
.y .opt { margin-left: 3px; height: 28px; }
.y .opt::after { border-color: #a4a07c; border-width: 1px 2px 2px 1px; }
.n { text-align: right; }
.focus { outline: 3px solid #000; outline-offset: -2px; }
.tool { display: block; width: 100%; height: 28px; text-align: left; padding-left: 2px; border: 2px solid #a0f0dc; border-right-color: #2a8068; border-bottom-color: #2a8068; }
.hot { background: #ffc850; }
.sym { display: block; width: 19px; height: 20px; margin: 0 auto; background: #fff; fill: none; stroke: #000; }
.sym text { font-size: 8px; fill: #000; stroke: none; }
.hscroll { flex: none; display: flex; align-items: center; height: 15px; margin: 4px 0 5px; padding: 0 2px; background: #44a890; border: 2px solid #2a8068; border-bottom-color: #a8f4e0; }
.thumb { width: 590px; height: 11px; background: var(--teal); border: 1px solid #a0f0dc; border-bottom-color: #2a8068; }
.tri { border: 5px solid transparent; }
.tri.left { border-left: 0; border-right: 9px solid #a0f0dc; }
.tri.right { border-right: 0; border-left: 9px solid #a0f0dc; }
.bar { flex: none; display: flex; align-items: stretch; height: 34px; border: 1px solid #000; margin-bottom: 3px; }
.nav .cell, .merge .cell { margin: -1px 0; }
.current { width: 42px; background: #ffc850; border-right: 1px solid #000; margin-right: 1px; font-size: 12px; display: grid; place-items: center start; }
.nav .cell { padding-left: 1px; padding-right: 1px; }
.nav label { align-self: center; padding-left: 1px; }
.idx { width: 60px; margin: 2px 4px 1px 5px; border-color: #2a8068 #a8f4e0 #a8f4e0 #2a8068; }
.nav .ic { padding: 0 4px; width: 28px; }
.ic svg { display: block; width: 16px; height: 18px; fill: none; stroke: #000; }
.nav .w-unit { width: 89px; padding-left: 5px; } .nav .w-reg { width: 115px; padding-left: 5px; }
.w-merge { width: 363px; }
.w-merge label { padding: 0 17px 0 8px; white-space: nowrap; }
.merge { margin-bottom: 0; }
.actions { flex: none; display: grid; grid-template-columns: repeat(4, 1fr); height: 31px; }

/* annotation */
.note { position: absolute; left: 214px; top: 538px; width: 392px; height: 127px; background: #fff; border: 3px solid #d81818; padding: 3px 4px; font: bold 15px/20px var(--mono); box-shadow: 0 0 4px #600; }
.arrow { position: absolute; left: 0; top: 0; pointer-events: none; fill: none; filter: drop-shadow(2px 3px 2px rgba(0, 0, 0, .6)); }
.badge { position: absolute; right: -29px; top: 862px; width: 48px; height: 48px; border-radius: 50%; border: 3px solid #dfe8e0; background: radial-gradient(circle at 50% 30%, #60d880, #28b050); color: #fff; font: bold 12px "Open Sans", sans-serif; padding-left: 3px; text-align: left; text-shadow: 0 1px 1px #063; }

/* measure popup */
.popup { left: 1732px; right: -2px; top: 245px; height: 200px; }
.popup-body { margin-top: 2px; height: 170px; background: var(--aqua); border: 1px solid #000; text-align: center; padding-top: 1px; }

/* background document */
.word-back { left: 1126px; right: -10px; top: 277px; bottom: -10px; }
.back-tools { display: flex; gap: 7px; padding: 4px 14px 0; height: 60px; align-items: flex-start; background: #f0eee9; font: 12px/16px var(--cjk); white-space: nowrap; overflow: hidden; }
.back-tools svg, .back-tools b, .back-tools i { flex: none; }
.back-tools b { width: 16px; font-size: 14px; }
.back-tools i { width: 1px; height: 16px; background: #aca899; }
.back-tools .pct { width: 58px; background: #fff; }
.back-doc { height: 700px; margin-top: 80px; display: flex; flex-direction: column; background: #fff; }
.back-doc i { display: block; border-top: 1px solid #999; }
.back-doc .a { height: 136px; background: repeating-linear-gradient(#fff 0 20px, #aaa 20px 21px); }
.back-doc .b { height: 20px; border-top: 5px solid #6c9; }
.back-doc .c { height: 72px; background: repeating-linear-gradient(#b8ffff 0 22px, #6c9 22px 24px); }
.back-doc .d { height: 32px; }
.back-doc .e { height: 92px; border: 2px solid #000; background: linear-gradient(#6fd8a0 0 22px, #fff 22px); }

/* foreground document */
.word { left: 976px; right: 5px; top: 309px; bottom: -20px; display: flex; flex-direction: column; font: 12px/16px var(--cjk); }
.word .caption { flex: none; font: bold 12px/16px var(--mono); }
.word-bars { flex: none; padding: 2px 3px 0; background: linear-gradient(90deg, #d8d5ce, #f5f4f2); }
.strip { display: flex; align-items: center; width: max-content; height: 25px; margin-bottom: 1px; padding-left: 7px; background: linear-gradient(#f8f7f5, #e2e0da 70%, #cfccc2); border-radius: 3px; position: relative; }
.strip::before { content: ""; width: 3px; height: 16px; margin-left: -4px; margin-right: 1px; background: repeating-linear-gradient(#a8a59c 0 2px, transparent 2px 4px); }
.strip button { width: 23px; height: 22px; display: grid; place-items: center; }
.strip svg { width: 16px; height: 16px; display: block; overflow: visible; }
.strip .on { border: 1px solid #0a246a; background: #d0d4e0; }
.sep { width: 5px; height: 18px; background: linear-gradient(#aca899, #aca899) 2px 0 / 1px 18px no-repeat; }
.dd { width: 12px; height: 3px; background: linear-gradient(#000, #000) 3px 0 / 5px 1px no-repeat, linear-gradient(#000, #000) 4px 1px / 3px 1px no-repeat, linear-gradient(#000, #000) 5px 2px / 1px 1px no-repeat; }
.dd.off { width: 10px; opacity: .4; }
.end { width: 12px; height: 25px; border-radius: 0 3px 3px 0; background: linear-gradient(90deg, #a8a8a8, #787878); position: relative; }
.end::after { content: ""; position: absolute; left: 3px; bottom: 4px; border: 3px solid transparent; border-top-color: #000; border-bottom: 0; }
.end::before { content: ""; position: absolute; left: 3px; bottom: 8px; width: 6px; height: 1px; background: #fff; }
.strip .fan { font-size: 16px; }
.strip .read { display: flex; align-items: center; gap: 3px; width: auto; padding: 0 4px 0 3px; font-family: var(--mono); white-space: nowrap; }
.fmt { font: bold 14px/16px "Liberation Serif", "Noto Sans CJK SC", serif; }
.boxed { border: 1px solid #555; padding: 0 2px; line-height: 14px; }
.shaded { background: #aaa; padding: 0 2px; line-height: 14px; }
.ring { width: 17px; height: 17px; border: 1px solid #000; border-radius: 50%; font: 11px/14px var(--cjk); text-align: center; }
.strip .wen { display: flex; flex-direction: column; align-items: center; line-height: 8px; }
.wen small { font-size: 8px; font-weight: bold; }
.wen b { font-size: 11px; line-height: 10px; color: #2f4fb0; }
.combo { position: relative; display: flex; height: 19px; background: #fff; margin-right: 3px; }
.combo select, .combo input { flex: 1; padding-left: 2px; line-height: 17px; }
.combo::after { content: ""; position: absolute; right: 4px; top: 8px; border: 3px solid transparent; border-top-color: #000; border-bottom: 0; }
.zoom { width: 58px; margin: 0 1px 0 2px; }
.style { width: 81px; } .font { width: 123px; } .size { width: 52px; margin-right: 1px; }
.word-menu { display: flex; align-items: center; gap: 12px; height: 22px; padding: 0 0 0 14px; font-family: var(--mono); white-space: nowrap; }
.word-menu .latin { font-size: 10px; }
.latin span { font-size: 12px; }
.ask { flex: none; width: 178px; margin-right: -8px; font-family: var(--cjk); }
.ask input::placeholder { color: #808080; opacity: 1; }
.x { flex: none; position: relative; width: 16px; height: 12px; }
.strip.small { height: 26px; margin: 0; }
.view { flex: 1; min-height: 0; display: flex; border-top: 2px solid #404040; }
.view-main { flex: 1; min-width: 0; display: flex; flex-direction: column; }
.ruler { flex: none; display: flex; height: 23px; padding-right: 49px; background: var(--face); }
.tab-kind { width: 16px; height: 16px; margin: 3px 52px 0 5px; border: 1px solid #888; background: linear-gradient(#000, #000) 4px 3px / 2px 7px no-repeat, linear-gradient(#000, #000) 4px 9px / 6px 2px no-repeat; }
.scale { position: relative; flex: 1; display: flex; height: 12px; margin-top: 4px; font: 10px/13px "Liberation Sans", sans-serif; }
.dark { width: 46px; padding-left: 17px; background: #808080; }
.dark.last { width: 48px; padding-left: 25px; }
.nums { flex: 1; display: flex; padding-left: 15px; background: #fff; overflow: hidden; }
.nums span { flex: none; width: 28px; text-align: center; }
.indent { position: absolute; left: 41px; top: -3px; width: 10px; height: 22px; }
.indent-r { position: absolute; right: 44px; top: 3px; width: 10px; height: 10px; }
.doc { flex: 1; min-height: 0; display: flex; }
.gutter { width: 71px; border-left: 25px solid var(--face); background: #808080; }
.gutter.right { width: 46px; border: 0; }
.page { flex: 1; min-width: 0; background: #fff; border-left: 1px solid #000; border-right: 2px solid #000; overflow: hidden; }
.text { padding: 1px 0 0 48px; font-size: 14px; line-height: 21px; white-space: nowrap; }
.text p { height: 21px; }
.text span, .num { font: normal 12px/21px "Liberation Mono", monospace; }
.num { display: inline-block; width: 28px; }
.num.five { width: 20px; color: #336; }
.text em { font-style: normal; color: #0000d0; }
.text s { text-decoration: none; color: #888; font: 11px/21px "DejaVu Sans", sans-serif; }
.in { padding-left: 28px; }
.in-b { padding-left: 79px; }
.in-c { padding-left: 72px; }
.hd { display: inline-block; height: 20px; line-height: 20px; font-size: 16px; background: #f00; margin-right: 8px; color: #300; }
.hd.cam { margin-right: 0; }
.text .hd .en2 { font: bold 14px/20px "Liberation Mono", monospace; }
.no { font-size: 16px; }
.sm { font-size: 12px; color: #000080; }
.sm span { font-size: 10px; }
.sm strong { font: normal 12px/21px "Liberation Sans", sans-serif; }
.bl, .bl .num { color: #264d80; }
.bl strong { font: normal 12px/21px "Open Sans", sans-serif; }
.break { position: relative; height: 2px; margin-top: 3px; background: #000; }
.break::before, .break::after { content: ""; position: absolute; top: -5px; width: 24px; height: 12px; border: 1px solid #aaa; }
.break::before { left: 24px; border-left: 0; }
.break::after { right: 27px; border-right: 0; }
.figure { margin: 9px 153px 0 48px; border: 1px solid #000; border-bottom: 0; padding: 0 16px 0 19px; height: 400px; }
.figure h2 { font: 16px/20px "Liberation Sans", "Noto Sans CJK SC", sans-serif; height: 33px; text-align: center; }
.plate { height: 360px; border: 1px solid #000; }
.plate p { height: 18px; padding-left: 77px; font: bold 12px/18px var(--cjk); color: #c81818; }
.plate svg { display: block; }
.vscroll { width: 17px; display: flex; flex-direction: column; background: #eceae6; }
.split { height: 6px; background: var(--face); border-bottom: 2px solid #404040; }
.up, .knob { background: var(--face); border: 1px solid #fff; border-right: 2px solid #404040; border-bottom: 2px solid #404040; }
.up { height: 16px; display: grid; place-items: center; }
.up::after { content: ""; border: 4px solid transparent; border-bottom-color: #000; border-top: 0; }
.track { height: 340px; background: repeating-conic-gradient(#fff 0 25%, #d8d5ce 0 50%) 0 0 / 2px 2px; }
.knob { height: 130px; }
.rest { flex: 1; }
```
